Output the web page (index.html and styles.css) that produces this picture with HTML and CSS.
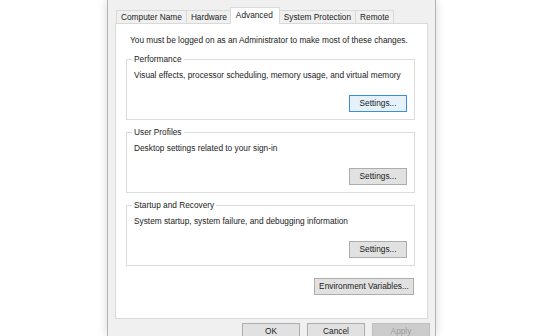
FILE: index.html
```html
<!DOCTYPE html>
<html>
<head>
<meta charset="utf-8">
<link rel="stylesheet" href="styles.css">
</head>
<body>
<div class="window">
  <div class="tabs">
    <div class="tab">Computer Name</div>
    <div class="tab">Hardware</div>
    <div class="tab active">Advanced</div>
    <div class="tab">System Protection</div>
    <div class="tab">Remote</div>
  </div>
  <div class="panel">
    <p class="note">You must be logged on as an Administrator to make most of these changes.</p>
    <fieldset class="group">
      <legend>Performance</legend>
      <p class="desc">Visual effects, processor scheduling, memory usage, and virtual memory</p>
      <div class="row"><button class="btn focus">Settings...</button></div>
    </fieldset>
    <fieldset class="group">
      <legend>User Profiles</legend>
      <p class="desc">Desktop settings related to your sign-in</p>
      <div class="row"><button class="btn">Settings...</button></div>
    </fieldset>
    <fieldset class="group">
      <legend>Startup and Recovery</legend>
      <p class="desc">System startup, system failure, and debugging information</p>
      <div class="row"><button class="btn">Settings...</button></div>
    </fieldset>
    <div class="row env"><button class="btn wide">Environment Variables...</button></div>
  </div>
  <div class="actions">
    <button class="btn">OK</button>
    <button class="btn">Cancel</button>
    <button class="btn" disabled>Apply</button>
  </div>
</div>
</body>
</html>
```
FILE: styles.css
```css
* { box-sizing: border-box; }
html, body { margin: 0; padding: 0; background: #ffffff; }
body {
  width: 560px;
  height: 336px;
  overflow: hidden;
  font-family: "Liberation Sans", Arial, sans-serif;
  font-size: 8.3px;
  line-height: 12px;
  color: #1b1b1b;
}
.window {
  margin-left: 107px;
  width: 329px;
  height: 336px;
  overflow: hidden;
  background: #f0f0f0;
  border: 1px solid #b4b4b4;
  border-top: none;
  border-bottom: none;
  box-shadow: 0 0 9px rgba(0, 0, 0, 0.16);
  padding: 7px 7px 0 7px;
}
.tabs {
  display: flex;
  align-items: flex-end;
  height: 16px;
  padding-left: 1px;
}
.tab {
  height: 13px;
  line-height: 12px;
  padding: 0 4px;
  border: 1px solid #d9d9d9;
  border-bottom: none;
  border-right: none;
  background: #f0f0f0;
  white-space: nowrap;
}
.tab:last-child { border-right: 1px solid #d9d9d9; }
.tab.active {
  height: 17px;
  margin-bottom: -1px;
  margin-left: -1px;
  padding: 1px 6px 0 5px;
  background: #ffffff;
  border-right: 1px solid #d9d9d9;
  position: relative;
  z-index: 1;
}
.tab.active + .tab { border-left: none; }
.panel {
  background: #ffffff;
  border: 1px solid #d9d9d9;
  height: 296px;
  padding: 10px 12px 0 10px;
}
.note {
  margin: 0 0 7px 4px;
  white-space: nowrap;
}
.group {
  margin: 0 0 6px 0;
  padding: 0 7px 7px 7px;
  border: 1px solid #dcdcdc;
  min-width: 0;
}
.group legend {
  padding: 0 2px;
  margin-left: -2px;
  line-height: 12px;
}
.desc {
  margin: 4px 0 14px 0;
  white-space: nowrap;
}
.row {
  display: flex;
  justify-content: flex-end;
}
.btn {
  font: inherit;
  color: #1b1b1b;
  height: 17px;
  width: 58px;
  padding: 0;
  background: #e1e1e1;
  border: 1px solid #adadad;
  border-radius: 0;
  line-height: 15px;
}
.btn.focus {
  background: #e5f1fb;
  border-color: #3d8ed4;
}
.btn.wide { width: 100px; }
.env {
  margin-top: 12px;
  margin-right: 1px;
}
.actions {
  display: flex;
  justify-content: flex-end;
  gap: 7px;
  margin-top: 4px;
  margin-right: -2px;
}
.btn:disabled {
  background: #cccccc;
  border-color: #bfbfbf;
  color: #9c9c9c;
}
```
